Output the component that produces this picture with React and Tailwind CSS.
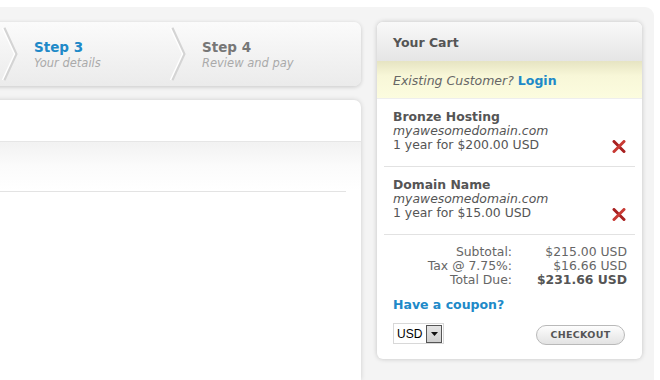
import React from "react";

function Chevron() {
  return (
    <svg width="20" height="64" viewBox="0 0 20 64" className="shrink-0">
      <polyline points="4,6 16,32 4,58" fill="none" stroke="#d4d4d4" strokeWidth="3" />
      <polyline points="2.5,6 14.5,32 2.5,58" fill="none" stroke="#ffffff" strokeWidth="1.5" />
    </svg>
  );
}

function RedX() {
  return (
    <svg width="14" height="13" viewBox="0 0 14 13" className="shrink-0">
      <path d="M2 1.5 L12 11.5" stroke="#a82020" strokeWidth="3" strokeLinecap="round" />
      <path d="M12 1.5 L2 11.5" stroke="#c83a34" strokeWidth="3" strokeLinecap="round" />
    </svg>
  );
}

function Item({ name, price }) {
  return (
    <div className="mx-[7px] border-b border-[#e2e2e2] pl-[9px] pr-[9px] pt-[11px] pb-[14px] flex items-end justify-between">
      <div className="text-[12.4px] leading-[14px] text-[#555]">
        <div className="font-bold">{name}</div>
        <div className="italic">myawesomedomain.com</div>
        <div>{price}</div>
      </div>
      <div className="mb-[-1px]">
        <RedX />
      </div>
    </div>
  );
}

export default function App() {
  return (
    <div
      className="w-[660px] h-[380px] bg-white overflow-hidden"
      style={{ fontFamily: '"DejaVu Sans", Verdana, sans-serif' }}
    >
      <div className="mt-[7px] ml-[-20px] w-[674px] h-[373px] bg-[#f4f4f4] rounded-tr-[9px] flex gap-[16px] pt-[15px] pr-[12px]">
        <div className="w-[381px] flex flex-col gap-[14px]">
          <div className="h-[64px] rounded-r-[7px] bg-gradient-to-b from-[#fbfbfb] to-[#ebebeb] shadow-[0_1px_4px_rgba(0,0,0,0.18)] flex items-center">
            <div className="w-[20px] shrink-0"></div>
            <Chevron />
            <div className="w-[148px] shrink-0 pl-[14px] flex flex-col">
              <div className="text-[13.5px] leading-[17px] font-bold text-[#2089c8]">Step 3</div>
              <div className="text-[11.5px] leading-[14px] italic text-[#aaaaaa]">Your details</div>
            </div>
            <Chevron />
            <div className="pl-[14px] flex flex-col">
              <div className="text-[13.5px] leading-[17px] font-bold text-[#777]">Step 4</div>
              <div className="text-[11.5px] leading-[14px] italic text-[#aaaaaa]">Review and pay</div>
            </div>
          </div>
          <div className="flex-1 bg-white rounded-tr-[7px] shadow-[0_0_5px_rgba(0,0,0,0.16)]">
            <div className="h-[42px] border-b border-[#e6e6e6]"></div>
            <div className="h-[49px] bg-gradient-to-b from-[#f2f2f2] via-[#fbfbfb] via-50% to-white"></div>
            <div className="h-px bg-[#e3e3e3] mr-[15px]"></div>
          </div>
        </div>

        <div className="w-[265px] h-[337px] bg-white rounded-[6px] shadow-[0_0_5px_rgba(0,0,0,0.2)] overflow-hidden flex flex-col">
          <div className="h-[39px] shrink-0 bg-gradient-to-b from-[#f9f9f9] to-[#e5e5e5] flex items-center pl-[16px] pt-[3px] text-[12.5px] font-bold text-[#555]">
            Your Cart
          </div>
          <div className="h-[38px] shrink-0 bg-gradient-to-b from-[#e6e4c2] via-[#f8f7d8] via-40% to-[#fcfcdf] border-b border-[#eeeeee] flex items-center pl-[16px] pt-[3px] text-[12.5px] text-[#666]">
            <span className="italic">Existing Customer?</span>
            <span className="ml-[4px] font-bold text-[#2089c8]">Login</span>
          </div>
          <Item name="Bronze Hosting" price="1 year for $200.00 USD" />
          <Item name="Domain Name" price="1 year for $15.00 USD" />
          <div className="pt-[10px] pr-[15px] grid grid-cols-[135px_1fr] text-[12.4px] leading-[14px] text-[#666] text-right">
            <div>Subtotal:</div>
            <div>$215.00 USD</div>
            <div>Tax @ 7.75%:</div>
            <div>$16.66 USD</div>
            <div>Total Due:</div>
            <div className="font-bold text-[#555]">$231.66 USD</div>
          </div>
          <div className="pl-[16px] mt-[11px] text-[12.5px] leading-[14px] font-bold text-[#2089c8]">Have a coupon?</div>
          <div className="mt-[11px] pl-[16px] pr-[17px] flex items-start justify-between">
            <div className="w-[51px] h-[21px] border border-[#d8d8d8] bg-white flex items-center justify-between pl-[3px] pr-[1px]">
              <span className="text-[12px] text-black" style={{ fontFamily: '"Liberation Sans", Arial, sans-serif' }}>USD</span>
              <div className="w-[16px] h-[18px] border border-[#555] bg-gradient-to-b from-[#e4e4e4] to-[#cfcfcf] flex items-center justify-center">
                <svg width="7" height="4" viewBox="0 0 7 4"><path d="M0 0 L7 0 L3.5 4 Z" fill="#111" /></svg>
              </div>
            </div>
            <div className="mt-[2px] w-[89px] h-[20px] rounded-full border border-[#b9b9b9] bg-gradient-to-b from-[#fdfdfd] to-[#e3e3e3] flex items-center justify-center text-[9.5px] font-bold text-[#555] tracking-[0.3px]">
              CHECKOUT
            </div>
          </div>
        </div>
      </div>
    </div>
  );
}
